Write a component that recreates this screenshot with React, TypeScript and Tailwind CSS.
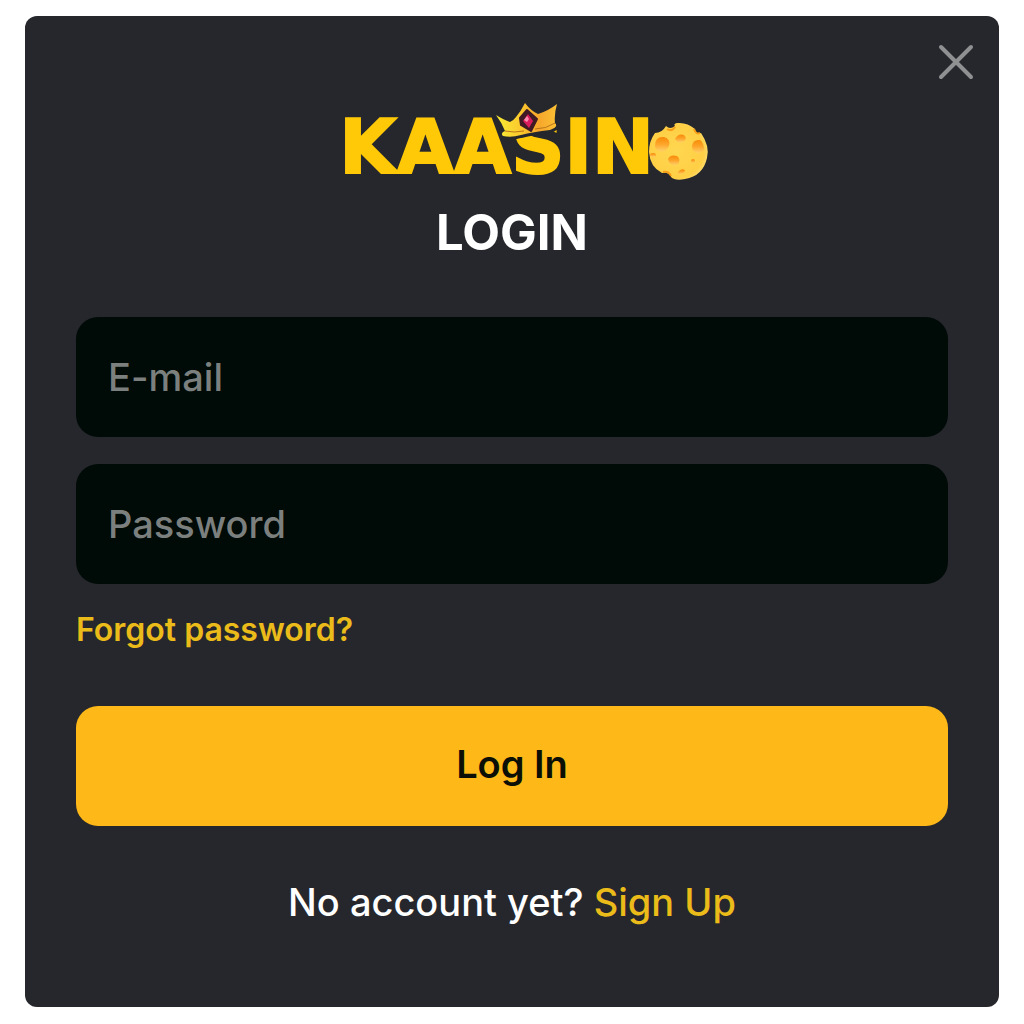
import React, { useState } from "react";

const INPUT_CLASS =
  "h-[120px] w-full rounded-[22px] bg-[#000a06] px-8 text-[38px] font-medium text-white placeholder:text-[#7b807e] focus:outline-none";

function Logo() {
  return (
    <svg viewBox="0 0 396 84" className="w-[396px] max-w-full overflow-visible" role="img" aria-label="Kaasino">
      <defs>
        <linearGradient id="crown" x1="0" y1="0" x2="1" y2="0">
          <stop offset="0" stopColor="#f6ec35" />
          <stop offset="0.4" stopColor="#fbc92d" />
          <stop offset="0.7" stopColor="#f7a62b" />
          <stop offset="1" stopColor="#fbc034" />
        </linearGradient>
        <linearGradient id="hole" x1="0" y1="0" x2="0" y2="1">
          <stop offset="0" stopColor="#f98a08" />
          <stop offset="0.5" stopColor="#fda52a" />
          <stop offset="1" stopColor="#ffd168" />
        </linearGradient>
        <radialGradient id="cheese" cx="0.45" cy="0.5" r="0.6">
          <stop offset="0" stopColor="#ffd750" />
          <stop offset="0.8" stopColor="#ffcf45" />
          <stop offset="1" stopColor="#ffe07c" />
        </radialGradient>
      </defs>

      <text
        x="340"
        y="75"
        textAnchor="end"
        fill="#ffc907"
        stroke="#ffc907"
        strokeWidth="2"
        className="font-['DejaVu_Sans',sans-serif] text-[74px] font-bold"
      >
        KAASIN
      </text>

      {/* crown */}
      <path
        d="M182 17 Q190 22 196 24 Q200 22 202 19 Q207 13 211 5 Q217 13 224 16 Q234 13 243 6 Q240 16 241 25 Q245 29 236 32 Q219 34 207 37 Q197 40 189 38 Q186 35 191 33 Q188 25 182 17Z"
        fill="url(#crown)"
        stroke="#25272c"
        strokeWidth="6"
        strokeLinejoin="round"
        paintOrder="stroke"
      />
      <path d="M191 33 Q200 35 210 33 M221 31 Q232 31 241 25" fill="none" stroke="#b8741a" strokeWidth="1" />
      <path d="M213 12 L223 21 L217 33 L207 27 L206 20Z" fill="#401a24" stroke="#401a24" strokeWidth="2" strokeLinejoin="round" />
      <path d="M214 16 L219 23 L215 30 L209 23Z" fill="#d91c5c" />
      <path d="M213 18 L215 21 L213 24 L210 22Z" fill="#fa8eae" />

      {/* cheese */}
      <path
        d="M352 28 Q356 32 361 28 Q359 26 363 25 Q373 24 381 31 Q381 36 387 35 Q396 48 393 60 Q389 78 371 81 Q361 83 357 79 Q356 74 348 75 Q336 69 335 54 Q335 43 341 35 Q348 35 352 28Z"
        fill="url(#cheese)"
      />
      <path d="M341 48 Q341 38 350 39 Q357 41 355 48 Q352 55 345 53 Q341 51 341 48Z" fill="url(#hole)" />
      <path d="M378 48 Q379 41 386 42 Q390 45 390 52 Q386 57 381 54 Q378 52 378 48Z" fill="url(#hole)" />
      <path d="M361 41 Q364 35 370 37 Q374 41 369 44 Q364 46 361 41Z" fill="url(#hole)" />
      <path d="M354 61 Q356 56 363 58 Q368 62 363 67 Q356 69 354 61Z" fill="url(#hole)" />
      <ellipse cx="339" cy="57" rx="3" ry="2" fill="url(#hole)" />
      <ellipse cx="379" cy="63" rx="2" ry="2" fill="url(#hole)" />
      <path d="M364 74 Q367 70 371 72 Q370 77 364 76Z" fill="url(#hole)" />
      <path d="M353 31 Q358 34 361 29 M380 31 Q382 37 386 35 M349 74 Q355 73 357 78" fill="none" stroke="#f79f18" strokeWidth="2" />
    </svg>
  );
}

function App() {
  const [email, setEmail] = useState("");
  const [password, setPassword] = useState("");

  const handleSubmit = (e: React.FormEvent) => {
    e.preventDefault();
  };

  return (
    <main className="min-h-screen bg-white px-[25px] py-4 font-['Inter',sans-serif]">
      <section className="relative flex flex-col items-center rounded-xl bg-[#25272c] px-[51px] pt-[82px] pb-[81px]">
        <button type="button" aria-label="Close" className="absolute top-7 right-[25px] text-[#8f9092]">
          <svg viewBox="0 0 36 36" className="size-9" fill="none" stroke="currentColor" strokeWidth="4" strokeLinecap="round">
            <path d="M3 3 L33 33 M33 3 L3 33" />
          </svg>
        </button>

        <Logo />
        <h1 className="mt-[21px] text-[49px] leading-[60px] font-bold text-white">LOGIN</h1>

        <form onSubmit={handleSubmit} className="mt-[54px] flex w-full flex-col">
          <input
            type="email"
            aria-label="E-mail"
            placeholder="E-mail"
            value={email}
            onChange={(e) => setEmail(e.target.value)}
            className={INPUT_CLASS}
          />
          <input
            type="password"
            aria-label="Password"
            placeholder="Password"
            value={password}
            onChange={(e) => setPassword(e.target.value)}
            className={`mt-[27px] ${INPUT_CLASS}`}
          />
          <a href="#forgot" className="mt-6 self-start text-[32px] leading-[44px] font-semibold text-[#ebbb1a]">
            Forgot password?
          </a>
          <button
            type="submit"
            className="mt-[54px] h-[120px] w-full rounded-[22px] bg-[#feb817] pb-1 text-[38px] font-semibold text-[#0c0f05]"
          >
            Log In
          </button>
        </form>

        <p className="mt-[52px] text-[38px] leading-[48px] font-medium text-white">
          No account yet?{" "}
          <a href="#signup" className="text-[#ebbb1a]">
            Sign Up
          </a>
        </p>
      </section>
    </main>
  );
}

export default App;
